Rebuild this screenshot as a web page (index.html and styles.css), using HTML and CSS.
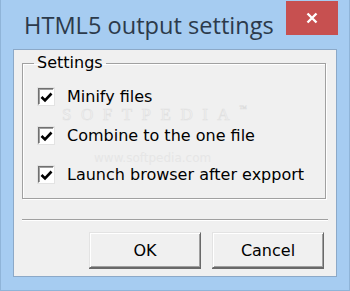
FILE: index.html
```html
<!DOCTYPE html>
<html lang="en">
<head>
  <meta charset="UTF-8">
  <title>HTML5 output settings</title>
  <link rel="stylesheet" href="styles.css">
</head>
<body>
  <div class="window">
    <div class="titlebar">
      <span class="title">HTML5 output settings</span>
      <button class="close" aria-label="Close">
        <svg width="12" height="12" viewBox="0 0 12 12"><path d="M1.5 1.5 L10.5 10.5 M10.5 1.5 L1.5 10.5" stroke="#fff" stroke-width="2.4" fill="none"/></svg>
      </button>
    </div>

    <div class="client">
      <fieldset class="group">
        <legend>Settings</legend>
        <label class="option">
          <span class="box"><svg width="13" height="12" viewBox="0 0 13 12"><path d="M1.5 6 L5 9.5 L11.5 2.5" stroke="#000" stroke-width="2.6" fill="none"/></svg></span>
          Minify files
        </label>
        <label class="option">
          <span class="box"><svg width="13" height="12" viewBox="0 0 13 12"><path d="M1.5 6 L5 9.5 L11.5 2.5" stroke="#000" stroke-width="2.6" fill="none"/></svg></span>
          Combine to the one file
        </label>
        <label class="option">
          <span class="box"><svg width="13" height="12" viewBox="0 0 13 12"><path d="M1.5 6 L5 9.5 L11.5 2.5" stroke="#000" stroke-width="2.6" fill="none"/></svg></span>
          Launch browser after expport
        </label>
      </fieldset>

      <div class="separator"></div>

      <div class="actions">
        <button class="btn">OK</button>
        <button class="btn">Cancel</button>
      </div>

      <!-- faint site watermark -->
      <div class="mark">SOFTPEDIA<span class="tm">™</span></div>
      <div class="mark-url">www.softpedia.com</div>
    </div>
  </div>
</body>
</html>
```

FILE: styles.css
```css
/* ---- window frame ---- */
body { margin: 0; background: #a6ccf1; }

.window {
  width: 350px; height: 291px; box-sizing: border-box;
  background: #a6ccf1;
  border: 1px solid #8fb4d8; border-top: 0;
  display: flex; flex-direction: column;
}

.titlebar {
  height: 49px; display: flex; align-items: flex-start;
  padding-left: 23px; padding-right: 11px;
}
.title {
  font-family: "Open Sans", sans-serif; font-size: 23.6px; color: #2c3a4b;
  margin-top: 9px; flex: 1;
}
.close {
  width: 52px; height: 34px; margin-top: 1px; border: 0; padding: 0;
  background: #c75050; display: flex; align-items: center; justify-content: center;
}

/* ---- client area ---- */
.client {
  position: relative;
  margin: 0 12px; height: 228px; box-sizing: border-box;
  background: #f0f0f0; border: 1px solid #8ca9c8;
  padding: 4px 10px 0 8px;
  font-family: "DejaVu Sans", sans-serif; font-size: 16px; color: #000;
}

.group {
  margin: 0; padding: 15px 0 0 15px; height: 145px; box-sizing: border-box;
  border: 1px solid #a0a0a0;
  box-shadow: 1px 1px 0 #fff, inset 1px 1px 0 #fff;
  display: flex; flex-direction: column; gap: 20px;
}
.group legend { padding: 0 3px; margin-left: -4px; line-height: 18px; }

.option { display: flex; align-items: center; gap: 13px; height: 19px; }
.box {
  width: 14px; height: 15px; background: #fff;
  border: 1px solid; border-color: #707070 #fff #fff #707070;
  box-shadow: inset 1px 1px 0 #a0a0a0, 0 0 0 1px #e3e3e3;
  display: flex; align-items: center; justify-content: center;
}

.separator {
  margin-top: 20px; margin-right: -2px; height: 1px;
  background: #a0a0a0; border-bottom: 1px solid #fff;
}

.actions { display: flex; justify-content: flex-end; gap: 11px; margin-top: 11px; margin-right: 2px; }
.btn {
  width: 112px; height: 36px; box-sizing: border-box;
  font: inherit; color: #000; background: #f0f0f0;
  border: 1px solid; border-color: #e3e3e3 #696969 #696969 #e3e3e3;
  box-shadow: inset 1px 1px 0 #fff, inset -1px -1px 0 #a0a0a0, 0 1px 0 #696969;
}

/* watermark overlay, kept in the gaps between the rows */
.mark {
  position: absolute; left: 48px; top: 55px; line-height: 20px;
  font-family: "Liberation Serif", serif; font-size: 17px; letter-spacing: 9.5px;
  color: transparent; -webkit-text-stroke: 0.6px #e0e0e0;
  pointer-events: none;
}
.mark .tm { font-size: 8px; letter-spacing: 0; vertical-align: top; line-height: 8px; -webkit-text-stroke: 0.4px #dcdcdc; }
.mark-url {
  position: absolute; left: 80px; top: 102px; line-height: 12px;
  font-family: "DejaVu Sans", sans-serif; font-size: 12px; color: #e6e6e6;
  pointer-events: none;
}
```
